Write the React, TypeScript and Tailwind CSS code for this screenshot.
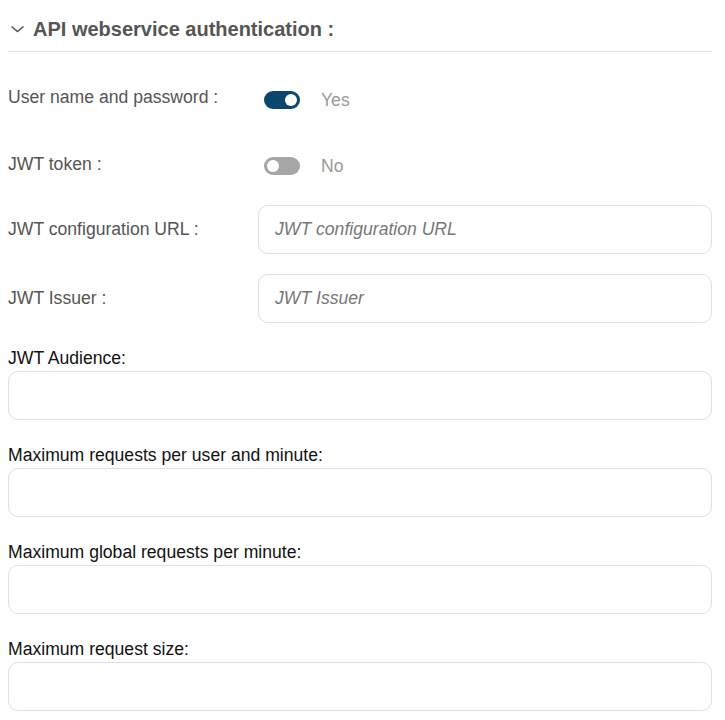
import { useState } from 'react';

function Toggle({ on, onClick }: { on: boolean; onClick: () => void }) {
  return (
    <button
      type="button"
      onClick={onClick}
      className={`relative flex h-[18px] w-[36px] items-center rounded-full px-[3px] ${on ? 'justify-end bg-[#0b466d]' : 'justify-start bg-[#a6a6a6]'}`}
    >
      <span className="block h-[12px] w-[12px] rounded-full bg-white" />
    </button>
  );
}

function InlineInput({ label, placeholder }: { label: string; placeholder: string }) {
  return (
    <div className="flex items-center">
      <label className="w-[250px] shrink-0 text-[#555]">{label}</label>
      <input
        type="text"
        placeholder={placeholder}
        className="h-[49px] w-[454px] rounded-[10px] border border-[#e0e0e0] bg-white px-4 text-[#333] outline-none placeholder:italic placeholder:text-[#777]"
      />
    </div>
  );
}

function StackedInput({ label }: { label: string }) {
  return (
    <div className="flex flex-col">
      <label className="h-[28px] pt-[2px] text-[#111]">{label}</label>
      <input
        type="text"
        className="h-[49px] w-[704px] rounded-[10px] border border-[#e0e0e0] bg-white px-4 text-[#333] outline-none"
      />
    </div>
  );
}

export default function App() {
  const [userPass, setUserPass] = useState(true);
  const [jwt, setJwt] = useState(false);

  return (
    <div className="min-h-screen bg-white px-2 font-['Liberation_Sans',Arial,sans-serif] text-[17.6px] leading-[27px]">
      <div className="w-[704px]">
        {/* header */}
        <div className="flex h-[30px] items-center mt-[14px] mb-[7px]">
          <svg className="ml-[2px] mr-[8px] h-[8px] w-[15px]" viewBox="0 0 15 8" fill="none" stroke="#555" strokeWidth="1.6">
            <path d="M1.5 1.5 L7.5 6.5 L13.5 1.5" />
          </svg>
          <span className="text-[20px] font-bold text-[#555]">API webservice authentication :</span>
        </div>
        <div className="border-b border-[#e0e0e0]" />

        <div className="mt-[30px] flex flex-col">
          <div className="flex items-start">
            <span className="w-[256px] shrink-0 pt-[2px] text-[#555]">User name and password :</span>
            <div className="flex h-[36px] items-center gap-[21px]">
              <Toggle on={userPass} onClick={() => setUserPass(!userPass)} />
              <span className="text-[#9a9a9a]">{userPass ? 'Yes' : 'No'}</span>
            </div>
          </div>

          <div className="mt-[30px] flex items-start">
            <span className="w-[256px] shrink-0 pt-[3px] text-[#555]">JWT token :</span>
            <div className="flex h-[36px] items-center gap-[21px]">
              <Toggle on={jwt} onClick={() => setJwt(!jwt)} />
              <span className="text-[#9a9a9a]">{jwt ? 'Yes' : 'No'}</span>
            </div>
          </div>

          <div className="mt-[21px] flex flex-col gap-[20px]">
            <InlineInput label="JWT configuration URL :" placeholder="JWT configuration URL" />
            <InlineInput label="JWT Issuer :" placeholder="JWT Issuer" />
            <StackedInput label="JWT Audience:" />
            <StackedInput label="Maximum requests per user and minute:" />
            <StackedInput label="Maximum global requests per minute:" />
            <StackedInput label="Maximum request size:" />
          </div>
        </div>
      </div>
    </div>
  );
}
